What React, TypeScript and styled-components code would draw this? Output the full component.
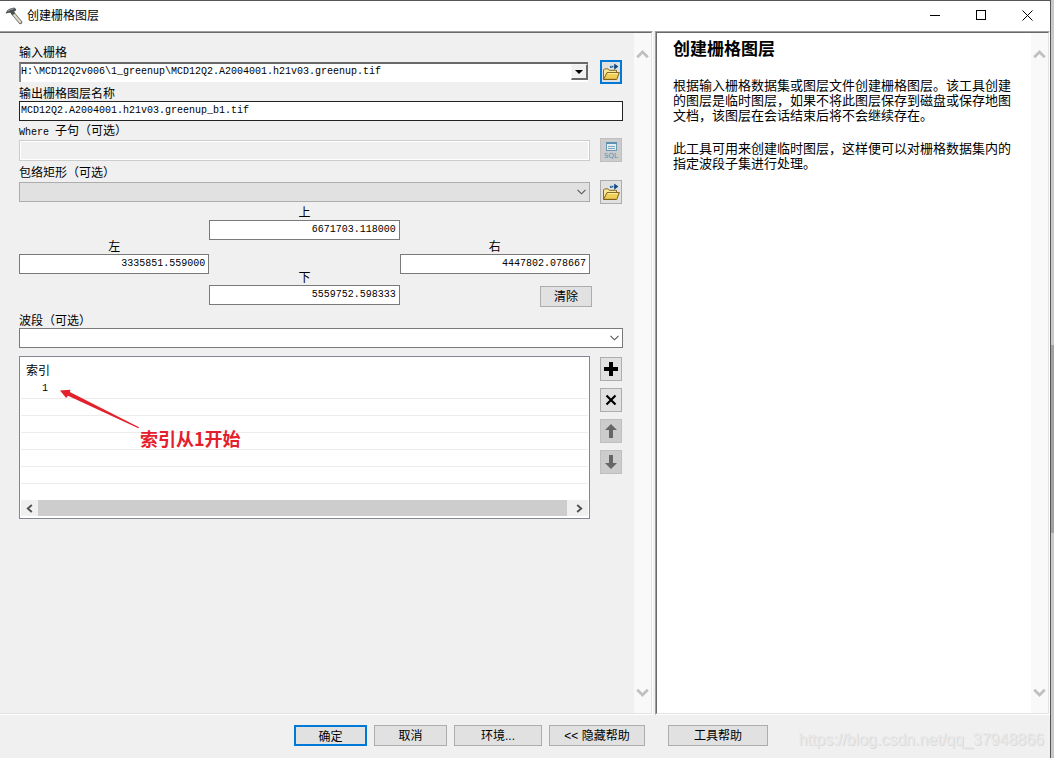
import React from 'react';
import styled, { createGlobalStyle, css } from 'styled-components';

const GlobalStyle = createGlobalStyle`
  *, *::before, *::after { box-sizing: border-box; }
  body {
    margin: 0;
    background: #f0f0f0;
    color: #000;
    font: 12px/16px "Liberation Sans", "Noto Sans CJK SC", sans-serif;
  }
  button, input, select { font: inherit; color: inherit; margin: 0; border-radius: 0; }
`;

const Screen = styled.div`
  display: flex;
  height: 100vh;
  min-height: 620px;
`;

const DialogWindow = styled.div`
  flex: 1;
  min-width: 0;
  display: flex;
  flex-direction: column;
  border-top: 1px solid #555;
  border-right: 1px solid #555;
  background: #f0f0f0;
`;

const OuterScroll = styled.div`
  width: 3px;
  background: #c9c9c9;
  display: flex;
  flex-direction: column;
  justify-content: center;
  padding-top: 120px;
`;

const OuterThumb = styled.div`
  height: 188px;
  background: #a2a2a2;
`;

const TitleBar = styled.header`
  display: flex;
  align-items: center;
  height: 30px;
  padding: 0 4px 0 5px;
  gap: 4px;
  background: #fff;
`;

const TitleText = styled.h1`
  flex: 1;
  margin: 0;
  font-size: 12px;
  font-weight: 400;
`;

const CaptionButton = styled.button`
  width: 46px;
  margin-right: -4px;
  height: 30px;
  padding: 0 0 2px;
  border: 0;
  background: transparent;
  display: grid;
  place-items: center;
`;

const Panes = styled.main`
  flex: 1;
  min-height: 0;
  display: grid;
  grid-template-columns: minmax(0, 653fr) minmax(0, 395fr);
  column-gap: 2px;
`;

const Pane = styled.section<{ $help?: boolean }>`
  display: flex;
  min-height: 0;
  border-top: 1px solid #a0a0a0;
  border-right: 1px solid #fff;
  border-bottom: 1px solid #fff;
  background: ${p => (p.$help ? '#fff' : '#f0f0f0')};
  ${p => p.$help && css`border-left: 1px solid #a0a0a0;`}
`;

const PaneInner = styled.div<{ $help?: boolean }>`
  flex: 1;
  min-width: 0;
  display: flex;
  border-top: 1px solid #696969;
  border-right: 1px solid #e3e3e3;
  border-bottom: 1px solid #e3e3e3;
  ${p => p.$help && css`border-left: 1px solid #696969;`}
`;

const ScrollBar = styled.div`
  width: 17px;
  padding: 17px 0 16px;
  background: #f9f9f9;
  display: flex;
  flex-direction: column;
  align-items: center;
  justify-content: space-between;
`;

const Form = styled.form`
  flex: 1;
  min-width: 0;
  padding: 11px 11px 0 19px;
  display: flex;
  flex-direction: column;
`;

const Field = styled.div<{ $gap?: number }>`
  display: flex;
  flex-direction: column;
  margin-top: ${p => p.$gap ?? 0}px;
`;

const Label = styled.label<{ $center?: boolean }>`
  height: 16px;
  line-height: 18px;
  text-align: ${p => (p.$center ? 'center' : 'left')};
`;

const Latin = styled.span`
  font-family: "Liberation Mono", monospace;
  font-size: 10px;
  white-space: pre;
`;

const ControlRow = styled.div`
  display: grid;
  grid-template-columns: minmax(0, 1fr) 22px;
  column-gap: 10px;
  margin-right: 1px;
  align-items: center;
`;

const TextBox = styled.input<{ $dark?: boolean; $number?: boolean }>`
  width: 100%;
  height: 20px;
  padding: ${p => (p.$number ? '0 3px 2px' : '0 1px 2px')};
  border: 1px solid ${p => (p.$dark ? '#222' : '#7a7a7a')};
  background: #fff;
  font: 10px/16px "Liberation Mono", "Noto Sans CJK SC", monospace;
  text-align: ${p => (p.$number ? 'right' : 'left')};
  &:disabled {
    height: 21px;
    border-color: #ccc;
    background: #f0f0f0;
    box-shadow: inset 0 0 0 1px #fff;
  }
`;

const SelectWrap = styled.div<{ $classic?: boolean }>`
  position: relative;
  display: flex;
  margin-right: ${p => (p.$classic ? 2 : 0)}px;
`;

const Select = styled.select<{ $look: 'classic' | 'grey' | 'plain' }>`
  appearance: none;
  width: 100%;
  height: 20px;
  padding: 0 20px 2px 1px;
  font: 10px/16px "Liberation Mono", "Noto Sans CJK SC", monospace;
  border: 1px solid ${p => (p.$look === 'grey' ? '#adadad' : '#7a7a7a')};
  background: ${p => (p.$look === 'grey' ? '#e1e1e1' : '#fff')};
  opacity: 1;
  ${p => p.$look === 'classic' && css`
    padding-left: 0;
    border-style: solid;
    border-width: 2px 0 0 2px;
    border-color: #696969 #fff #fff #8a8a8a;
  `}
`;

const SelectArrow = styled.span<{ $classic?: boolean }>`
  position: absolute;
  top: 2px;
  right: 0;
  width: 17px;
  height: 16px;
  display: grid;
  place-items: center;
  pointer-events: none;
  ${p => p.$classic && css`
    background: #f0f0f0;
    border: 1px solid #f6f6f6;
    border-right: 2px solid #696969;
    border-bottom: 2px solid #696969;
  `}
`;

const ToolButton = styled.button<{ $active?: boolean }>`
  width: 22px;
  height: 24px;
  padding: 0;
  display: grid;
  place-items: center;
  background: #e1e1e1;
  border: ${p => (p.$active ? '2px solid #0078d7' : '1px solid #adadad')};
  &:disabled { background: #ccc; border-color: #bfbfbf; }
`;

const Extent = styled.div`
  display: grid;
  grid-template-columns: repeat(3, minmax(0, 1fr));
  margin-right: 33px;
`;

const ExtentColumn = styled.div<{ $lower?: boolean }>`
  display: flex;
  flex-direction: column;
  padding-top: ${p => (p.$lower ? 34 : 0)}px;
`;

const PushButton = styled.button<{ $width: number; $primary?: boolean }>`
  width: ${p => p.$width}px;
  height: 21px;
  padding: 2px 0 0;
  line-height: 17px;
  white-space: pre;
  background: #e1e1e1;
  border: ${p => (p.$primary ? '2px solid #0078d7' : '1px solid #adadad')};
`;

const ClearRow = styled.div`
  display: flex;
  justify-content: flex-end;
  margin: 12px -2px 0 0;
`;

const ListRow = styled(ControlRow)`
  margin-top: 8px;
  align-items: start;
`;

const ListBox = styled.div`
  position: relative;
  border: 1px solid #828790;
  background: #fff;
  padding: 0 1px 2px;
`;

const Table = styled.table`
  width: 100%;
  border-collapse: collapse;
  th {
    height: 24px;
    padding: 4px 5px 0;
    text-align: left;
    font-weight: 400;
  }
  td {
    height: 17px;
    padding: 0;
    line-height: 16px;
    border-bottom: 1px solid #ececec;
  }
  tr:last-child td { border-bottom: 0; }
`;

const IndexValue = styled.span`
  display: block;
  width: 27px;
  text-align: right;
  font: 10px/16px "Liberation Mono", monospace;
`;

const HScroll = styled.div`
  display: grid;
  grid-template-columns: 17px 1fr 21px;
  height: 16px;
  background: #f0f0f0;
`;

const HThumb = styled.div`
  background: #cdcdcd;
`;

const HArrow = styled.div<{ $end?: boolean }>`
  display: grid;
  place-items: center;
  padding-left: ${p => (p.$end ? 4 : 0)}px;
`;

const Annotation = styled.div`
  position: absolute;
  left: 40px;
  top: 32px;
  color: #e3202b;
  pointer-events: none;
  svg { display: block; }
`;

const AnnotationText = styled.p`
  margin: 0 0 0 80px;
  font: 700 18px/18px "Noto Sans CJK SC", sans-serif;
`;

const ButtonStack = styled.div`
  display: flex;
  flex-direction: column;
  gap: 7px;
  padding-top: 1px;
`;

const HelpText = styled.article`
  flex: 1;
  min-width: 0;
  padding: 7px 16px 0;
  h2 {
    margin: 0;
    font-size: 17px;
    line-height: 20px;
    font-weight: 700;
  }
  p {
    margin: 18px 0 0;
    font-size: 13px;
    line-height: 15px;
  }
`;

const Footer = styled.footer`
  position: relative;
  display: flex;
  justify-content: center;
  gap: 7px;
  height: 43px;
  padding: 10px 0 0 12px;
`;

const HelpButtonSlot = styled.div`
  margin-left: 16px;
`;

const Watermark = styled.span`
  position: absolute;
  right: 6px;
  top: 15px;
  font: 16px/20px "Liberation Sans", sans-serif;
  color: #e9e9e9;
  text-shadow: 1px 1px 0 #dadada;
`;

function Hammer() {
  return (
    <svg width="18" height="18" viewBox="0 0 18 18" aria-hidden="true">
      <path d="M8.2 6.6 15.4 15.2" stroke="#77756c" strokeWidth="3.8" strokeLinecap="round" />
      <path d="M8.4 7 15.2 15" stroke="#dedac8" strokeWidth="2" strokeLinecap="round" />
      <path d="M.6 6.8C1.2 4.2 3 2.2 5.2 1.4l4-.8 2 1.6-.5 1.6-1.5.4.8 2.2-2.6 1.8-2-2.4C3.8 5.6 2.3 6 .6 6.8Z" fill="#4b4f50" />
      <path d="M2.8 4.2 5.6 2.4l3.2-.6" stroke="#a8acac" fill="none" />
    </svg>
  );
}

function OpenFolder() {
  return (
    <svg width="18" height="18" viewBox="0 0 18 18" aria-hidden="true">
      <path d="M1.5 16.5v-9.6l1-1h3.6l1.2 1.4h7.2V10" fill="#f8e79a" stroke="#8a6a1c" />
      <path d="M1.6 16.5 5 9.6h12.3l-2.6 6.9Z" fill="#f0cf58" stroke="#80611a" />
      <path d="M5.6 10.6h10.2" stroke="#fff3ad" />
      <path d="M2.8 15.4h11" stroke="#dcb440" />
      <path d="M8.8 5V3.6h4" fill="none" stroke="#2c6c9c" strokeWidth="1.6" strokeDasharray="1.6 .6" />
      <path d="m12.2.6 4.2 3-4.2 3.2Z" fill="#124a80" />
    </svg>
  );
}

function SqlIcon() {
  return (
    <svg width="18" height="20" viewBox="0 0 18 20" aria-hidden="true">
      <rect x="4.5" y="2.5" width="10" height="8" fill="#e2edf2" stroke="#6c9ab5" />
      <path d="M4 3h11" stroke="#5b92b3" strokeWidth="2" />
      <path d="M6 6.5h7M6 8.5h7" stroke="#80a8bc" />
      <text x="9" y="18" textAnchor="middle" fontFamily="DejaVu Sans, sans-serif" fontSize="7" fill="#4d94b7">SQL</text>
    </svg>
  );
}

function Chevron({ up }: { up?: boolean }) {
  return (
    <svg width="13" height="9" viewBox="0 0 13 9" aria-hidden="true">
      <path d={up ? 'M1.2 7.2 6.5 2l5.3 5.2' : 'M1.2 1.8 6.5 7l5.3-5.2'} fill="none" stroke="#c0c0c0" strokeWidth="2.8" />
    </svg>
  );
}

function ThinChevron() {
  return (
    <svg width="9" height="6" viewBox="0 0 9 6" aria-hidden="true">
      <path d="m.5.8 4 4 4-4" fill="none" stroke="#555" strokeWidth="1.1" />
    </svg>
  );
}

function SideChevron({ right }: { right?: boolean }) {
  return (
    <svg width="7" height="9" viewBox="0 0 7 9" aria-hidden="true">
      <path d={right ? 'm1.2 1 4 3.5-4 3.5' : 'm5.8 1-4 3.5 4 3.5'} fill="none" stroke="#505050" strokeWidth="1.9" />
    </svg>
  );
}

function Arrow({ down }: { down?: boolean }) {
  return (
    <svg width="14" height="14" viewBox="0 0 14 14" aria-hidden="true">
      <path d={down ? 'M5 0h4v8h4L7 14 1 8h4Z' : 'M5 14h4V6h4L7 0 1 6h4Z'} fill="#666" />
    </svg>
  );
}

function VerticalScroll() {
  return (
    <ScrollBar>
      <Chevron up />
      <Chevron />
    </ScrollBar>
  );
}

function NumberField({ id, label, value, gap }: { id: string; label: string; value: string; gap?: number }) {
  return (
    <Field $gap={gap}>
      <Label htmlFor={id} $center>{label}</Label>
      <TextBox id={id} defaultValue={value} $number />
    </Field>
  );
}

export default function App() {
  return (
    <Screen>
      <GlobalStyle />
      <DialogWindow>
        <TitleBar>
          <Hammer />
          <TitleText>创建栅格图层</TitleText>
          <CaptionButton aria-label="最小化">
            <svg width="11" height="11"><path d="M0 5.5h10" stroke="#000" /></svg>
          </CaptionButton>
          <CaptionButton aria-label="最大化">
            <svg width="11" height="11"><rect x=".5" y=".5" width="9" height="9" fill="none" stroke="#000" /></svg>
          </CaptionButton>
          <CaptionButton aria-label="关闭">
            <svg width="11" height="11"><path d="m.5.5 10 10M10.5.5l-10 10" stroke="#000" /></svg>
          </CaptionButton>
        </TitleBar>

        <Panes>
          <Pane>
            <PaneInner>
              <Form onSubmit={e => e.preventDefault()}>
                <Field>
                  <Label htmlFor="raster">输入栅格</Label>
                  <ControlRow>
                    <SelectWrap $classic>
                      <Select id="raster" $look="classic">
                        <option>H:\MCD12Q2v006\1_greenup\MCD12Q2.A2004001.h21v03.greenup.tif</option>
                      </Select>
                      <SelectArrow $classic>
                        <svg width="8" height="4"><path d="M0 0h8L4 4Z" /></svg>
                      </SelectArrow>
                    </SelectWrap>
                    <ToolButton type="button" $active aria-label="浏览"><OpenFolder /></ToolButton>
                  </ControlRow>
                </Field>

                <Field $gap={1}>
                  <Label htmlFor="layer">输出栅格图层名称</Label>
                  <TextBox id="layer" $dark defaultValue="MCD12Q2.A2004001.h21v03.greenup_b1.tif" />
                </Field>

                <Field $gap={1}>
                  <Label htmlFor="where"><Latin>Where </Latin>子句（可选）</Label>
                  <ControlRow>
                    <TextBox id="where" disabled />
                    <ToolButton type="button" disabled aria-label="SQL"><SqlIcon /></ToolButton>
                  </ControlRow>
                </Field>

                <Field $gap={2}>
                  <Label htmlFor="extent">包络矩形（可选）</Label>
                  <ControlRow>
                    <SelectWrap>
                      <Select id="extent" $look="grey" />
                      <SelectArrow><ThinChevron /></SelectArrow>
                    </SelectWrap>
                    <ToolButton type="button" aria-label="浏览"><OpenFolder /></ToolButton>
                  </ControlRow>
                </Field>

                <Extent>
                  <ExtentColumn $lower>
                    <NumberField id="left" label="左" value="3335851.559000" />
                  </ExtentColumn>
                  <ExtentColumn>
                    <NumberField id="top" label="上" value="6671703.118000" />
                    <NumberField id="bottom" label="下" value="5559752.598333" gap={29} />
                  </ExtentColumn>
                  <ExtentColumn $lower>
                    <NumberField id="right" label="右" value="4447802.078667" />
                    <ClearRow><PushButton type="button" $width={52}>清除</PushButton></ClearRow>
                  </ExtentColumn>
                </Extent>

                <Field $gap={5}>
                  <Label htmlFor="band">波段（可选）</Label>
                  <SelectWrap>
                    <Select id="band" $look="plain" />
                    <SelectArrow><ThinChevron /></SelectArrow>
                  </SelectWrap>
                </Field>

                <ListRow>
                  <ListBox>
                    <Table>
                      <thead>
                        <tr><th scope="col">索引</th></tr>
                      </thead>
                      <tbody>
                        <tr><td><IndexValue>1</IndexValue></td></tr>
                        {Array.from({ length: 6 }, (_, i) => <tr key={i}><td /></tr>)}
                      </tbody>
                    </Table>
                    <HScroll>
                      <HArrow><SideChevron /></HArrow>
                      <HThumb />
                      <HArrow $end><SideChevron right /></HArrow>
                    </HScroll>
                    <Annotation>
                      <svg width="80" height="40" viewBox="0 0 80 40" aria-hidden="true">
                        <path d="M0 1.5 10.5.8 9.8 3 79 38.2 78.4 39.2 8 6.8 6.2 9Z" fill="currentColor" />
                      </svg>
                      <AnnotationText>索引从1开始</AnnotationText>
                    </Annotation>
                  </ListBox>
                  <ButtonStack>
                    <ToolButton type="button" aria-label="添加">
                      <svg width="14" height="14"><path d="M7 0v14M0 7h14" stroke="#000" strokeWidth="4" /></svg>
                    </ToolButton>
                    <ToolButton type="button" aria-label="移除">
                      <svg width="12" height="12"><path d="m1.5 1.5 9 9m0-9-9 9" stroke="#000" strokeWidth="2.2" /></svg>
                    </ToolButton>
                    <ToolButton type="button" disabled aria-label="上移"><Arrow /></ToolButton>
                    <ToolButton type="button" disabled aria-label="下移"><Arrow down /></ToolButton>
                  </ButtonStack>
                </ListRow>
              </Form>
              <VerticalScroll />
            </PaneInner>
          </Pane>

          <Pane $help>
            <PaneInner $help>
              <HelpText>
                <h2>创建栅格图层</h2>
                <p>根据输入栅格数据集或图层文件创建栅格图层。该工具创建的图层是临时图层，如果不将此图层保存到磁盘或保存地图文档，该图层在会话结束后将不会继续存在。</p>
                <p>此工具可用来创建临时图层，这样便可以对栅格数据集内的指定波段子集进行处理。</p>
              </HelpText>
              <VerticalScroll />
            </PaneInner>
          </Pane>
        </Panes>

        <Footer>
          <PushButton $width={73} $primary>确定</PushButton>
          <PushButton $width={73}>取消</PushButton>
          <PushButton $width={88}>环境...</PushButton>
          <PushButton $width={96}>{'<< 隐藏帮助'}</PushButton>
          <HelpButtonSlot><PushButton $width={100}>工具帮助</PushButton></HelpButtonSlot>
          <Watermark>https://blog.csdn.net/qq_37948866</Watermark>
        </Footer>
      </DialogWindow>
      <OuterScroll><OuterThumb /></OuterScroll>
    </Screen>
  );
}
